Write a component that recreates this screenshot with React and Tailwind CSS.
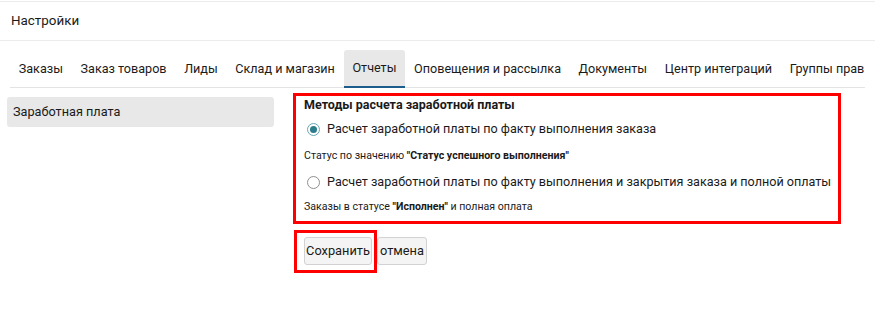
import React from 'react';

const tabs = [
    'Заказы',
    'Заказ товаров',
    'Лиды',
    'Склад и магазин',
    'Отчеты',
    'Оповещения и рассылка',
    'Документы',
    'Центр интеграций',
    'Группы прав',
];

const Radio = ({ checked }) => (
    <span className={`relative flex h-[13px] w-[13px] shrink-0 items-center justify-center rounded-full border bg-white ${checked ? 'border-[#6aa7b2]' : 'border-[#8f8f8f]'}`}>
        {checked && <span className="h-[7px] w-[7px] rounded-full bg-[#2b7d8a]" />}
    </span>
);

export default function App() {
    return (
        <div className="h-[324px] w-[875px] overflow-hidden bg-white font-['Roboto',sans-serif] text-[#1a1a1a]">
            {/* header */}
            <div className="mt-px flex h-[40px] items-center border-t border-b border-[#ececec] pl-[11px] text-[13.4px]">
                Настройки
            </div>

            {/* tabs */}
            <div className="mx-[10px] mt-[9px] flex whitespace-nowrap border-b border-[#e3e3e3] text-[12.6px]">
                {tabs.map((t) => (
                    <div
                        key={t}
                        className={`-mb-px flex h-[38px] items-center px-[8.8px] ${t === 'Отчеты' ? 'rounded-t-[3px] border-b-2 border-[#1d5d8c] bg-[#e8e8e8]' : ''}`}
                    >
                        {t}
                    </div>
                ))}
            </div>

            {/* body */}
            <div className="mt-[5px] flex items-start">
                <div className="ml-[7px] mt-[4px] flex h-[30px] w-[267px] items-center rounded-[3px] bg-[#e8e8e8] px-[6px] text-[12.7px]">
                    Заработная плата
                </div>

                <div className="ml-[19px] flex flex-col">
                    <div className="flex h-[131px] w-[548px] flex-col whitespace-nowrap border-[3px] border-[#ff0000] pl-[8px]">
                        <div className="flex h-[18px] items-center text-[12.5px] font-bold">
                            Методы расчета заработной платы
                        </div>
                        <div className="flex h-[30px] items-center gap-[7px] pl-[3px] text-[12.6px]">
                            <Radio checked />
                            <span>Расчет заработной платы по факту выполнения заказа</span>
                        </div>
                        <div className="flex h-[24px] items-center text-[10.6px]">
                            Статус по значению&nbsp;<b>"Статус успешного выполнения"</b>
                        </div>
                        <div className="flex h-[28px] items-center gap-[7px] pl-[3px] text-[12.6px]">
                            <Radio />
                            <span>Расчет заработной платы по факту выполнения и закрытия заказа и полной оплаты</span>
                        </div>
                        <div className="flex h-[22px] items-center text-[10.6px]">
                            Заказы в статусе&nbsp;<b>"Исполнен"</b>&nbsp;и полная оплата
                        </div>
                    </div>

                    <div className="ml-px mt-[6px] flex items-start text-[12.8px]">
                        <div className="border-[3px] border-[#ff0000] pb-[5px] pl-[7px] pr-[2px] pt-[4px]">
                            <button className="flex h-[28px] w-[68px] items-center justify-center rounded-[3px] border border-[#d2d2d2] bg-[#f4f4f4]">
                                Сохранить
                            </button>
                        </div>
                        <button className="mt-[7px] flex h-[28px] w-[50px] items-center justify-center rounded-[3px] border border-[#d2d2d2] bg-[#f4f4f4]">
                            отмена
                        </button>
                    </div>
                </div>
            </div>
        </div>
    );
}
